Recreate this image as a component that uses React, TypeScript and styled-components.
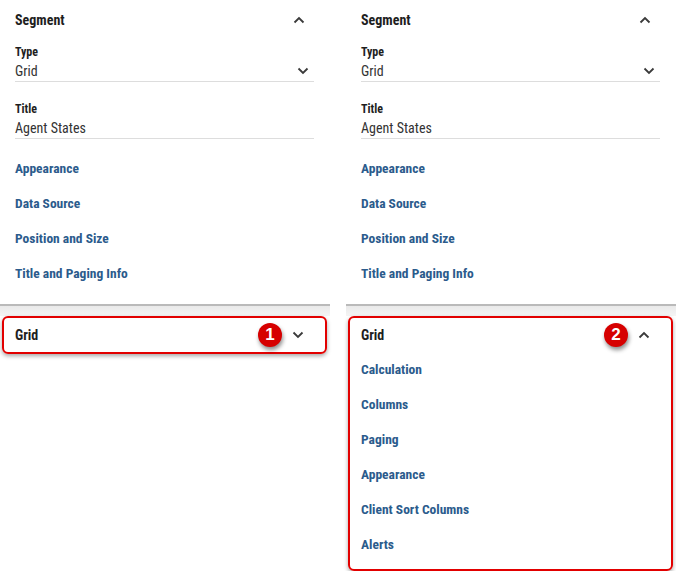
import React from 'react';
import styled, { createGlobalStyle } from 'styled-components';

const GlobalStyle = createGlobalStyle`
    body {
        margin: 0;
        background: #ffffff;
        font-family: "Roboto", "Liberation Sans", sans-serif;
    }
`;

const segmentLinks = ['Appearance', 'Data Source', 'Position and Size', 'Title and Paging Info'];
const gridLinks = ['Calculation', 'Columns', 'Paging', 'Appearance', 'Client Sort Columns', 'Alerts'];

function Chevron({ up }: { up?: boolean }) {
    return (
        <ChevronIcon width="12" height="8" viewBox="0 0 12 8">
            <polyline
                points={up ? '1.5,6.5 6,2 10.5,6.5' : '1.5,1.5 6,6 10.5,1.5'}
                fill="none"
                stroke="#3a3a3a"
                strokeWidth="1.8"
            />
        </ChevronIcon>
    );
}

function Panel({ step, open }: { step: number; open: boolean }) {
    return (
        <StyledPanel>
            <Section>
                <SectionHeader>
                    <HeaderTitle>Segment</HeaderTitle>
                    <Chevron up />
                </SectionHeader>
                <Field>
                    <FieldLabel>Type</FieldLabel>
                    <FieldValue>
                        Grid
                        <Chevron />
                    </FieldValue>
                </Field>
                <Field>
                    <FieldLabel>Title</FieldLabel>
                    <FieldValue>Agent States</FieldValue>
                </Field>
                <LinkList>
                    {segmentLinks.map((l) => (
                        <LinkItem key={l}>{l}</LinkItem>
                    ))}
                </LinkList>
            </Section>
            <Divider />
            <GridBox>
                <GridHeader>
                    <HeaderTitle>Grid</HeaderTitle>
                    <Badge>{step}</Badge>
                    <Chevron up={open} />
                </GridHeader>
                {open && (
                    <GridItems>
                        {gridLinks.map((l) => (
                            <LinkItem key={l}>{l}</LinkItem>
                        ))}
                    </GridItems>
                )}
            </GridBox>
        </StyledPanel>
    );
}

export default function App() {
    return (
        <>
            <GlobalStyle />
            <Page>
                <Panel step={1} open={false} />
                <Panel step={2} open />
            </Page>
        </>
    );
}

const Page = styled.div`
    display: flex;
    gap: 16px;
    width: 676px;
`;

const StyledPanel = styled.div`
    width: 330px;
    display: flex;
    flex-direction: column;
    font-stretch: condensed;
`;

const Section = styled.div`
    padding: 0 16px 0 15px;
`;

const SectionHeader = styled.div`
    height: 40px;
    display: flex;
    align-items: center;
    justify-content: space-between;
    padding-right: 9px;
`;

const HeaderTitle = styled.span`
    font-size: 14px;
    font-weight: 700;
    color: #1e1e1e;
`;

const ChevronIcon = styled.svg`
    display: block;
    flex: none;
`;

const Field = styled.div`
    margin-top: 3px;
    & + & {
        margin-top: 18px;
    }
`;

const FieldLabel = styled.div`
    font-size: 12px;
    font-weight: 700;
    line-height: 18px;
    color: #1e1e1e;
`;

const FieldValue = styled.div`
    display: flex;
    align-items: center;
    justify-content: space-between;
    padding-right: 5px;
    font-size: 14px;
    line-height: 20px;
    color: #333333;
    border-bottom: 1px solid #dddddd;
`;

const LinkList = styled.div`
    margin-top: 12px;
    margin-bottom: 13px;
`;

const LinkItem = styled.div`
    font-size: 13.5px;
    font-weight: 700;
    line-height: 35px;
    color: #2b5b8c;
`;

const Divider = styled.div`
    height: 10px;
    border-top: 2px solid #bababa;
    background: linear-gradient(#e9e9e9, #f5f5f5);
`;

const GridBox = styled.div`
    margin: 0 3px 0 2px;
    border: 2px solid #e20000;
    border-radius: 6px;
    box-shadow: 0 2px 4px rgba(0, 0, 0, 0.35);
    padding: 0 14px 0 11px;
`;

const GridHeader = styled.div`
    position: relative;
    height: 34px;
    display: flex;
    align-items: center;
    justify-content: space-between;
    padding-right: 7px;
`;

const Badge = styled.span`
    position: absolute;
    left: 243px;
    top: 5px;
    width: 24px;
    height: 24px;
    border-radius: 50%;
    background: #d60000;
    color: #ffffff;
    font-family: "Liberation Sans", sans-serif;
    font-size: 17px;
    font-weight: 700;
    display: flex;
    align-items: center;
    justify-content: center;
    box-shadow: 1px 3px 4px rgba(0, 0, 0, 0.45);
`;

const GridItems = styled.div`
    padding-bottom: 7px;
`;
